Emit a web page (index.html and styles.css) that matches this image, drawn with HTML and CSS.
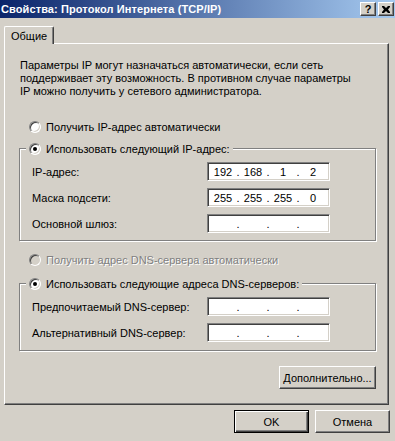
FILE: index.html
```html
<!DOCTYPE html>
<html lang="ru">
<head>
    <meta charset="UTF-8">
    <title>Свойства: Протокол Интернета (TCP/IP)</title>
    <link rel="stylesheet" href="styles.css">
</head>
<body>
    <div class="window">
        <div class="titlebar">
            <span class="title">Свойства: Протокол Интернета (TCP/IP)</span>
            <div class="caption-buttons">
                <span class="caption-btn">?</span>
                <span class="caption-btn">
                    <svg width="8" height="7" viewBox="0 0 8 7"><path d="M0 0h2l2 2 2-2h2v1L6 3.5 8 6v1H6L4 5 2 7H0V6l2-2.5L0 1z" fill="#000"/></svg>
                </span>
            </div>
        </div>

        <div class="tabs">
            <div class="tab">Общие</div>
        </div>

        <div class="panel">
            <p class="intro">Параметры IP могут назначаться автоматически, если сеть<br>поддерживает эту возможность. В противном случае параметры<br>IP можно получить у сетевого администратора.</p>

            <div class="radio-row first">
                <span class="radio"></span>Получить IP-адрес автоматически
            </div>

            <div class="group">
                <div class="group-title">
                    <span class="radio checked"></span>Использовать следующий IP-адрес:
                </div>
                <div class="field-row">
                    <span class="field-label">IP-адрес:</span>
                    <div class="ip-box">
                        <span class="seg">192</span><span class="dot">.</span><span class="seg">168</span><span class="dot">.</span><span class="seg">1</span><span class="dot">.</span><span class="seg">2</span>
                    </div>
                </div>
                <div class="field-row">
                    <span class="field-label">Маска подсети:</span>
                    <div class="ip-box">
                        <span class="seg">255</span><span class="dot">.</span><span class="seg">255</span><span class="dot">.</span><span class="seg">255</span><span class="dot">.</span><span class="seg">0</span>
                    </div>
                </div>
                <div class="field-row">
                    <span class="field-label">Основной шлюз:</span>
                    <div class="ip-box">
                        <span class="seg"></span><span class="dot">.</span><span class="seg"></span><span class="dot">.</span><span class="seg"></span><span class="dot">.</span><span class="seg"></span>
                    </div>
                </div>
            </div>

            <div class="radio-row disabled">
                <span class="radio"></span>Получить адрес DNS-сервера автоматически
            </div>

            <div class="group dns">
                <div class="group-title">
                    <span class="radio checked"></span>Использовать следующие адреса DNS-серверов:
                </div>
                <div class="field-row">
                    <span class="field-label">Предпочитаемый DNS-сервер:</span>
                    <div class="ip-box">
                        <span class="seg"></span><span class="dot">.</span><span class="seg"></span><span class="dot">.</span><span class="seg"></span><span class="dot">.</span><span class="seg"></span>
                    </div>
                </div>
                <div class="field-row">
                    <span class="field-label">Альтернативный DNS-сервер:</span>
                    <div class="ip-box">
                        <span class="seg"></span><span class="dot">.</span><span class="seg"></span><span class="dot">.</span><span class="seg"></span><span class="dot">.</span><span class="seg"></span>
                    </div>
                </div>
            </div>

            <div class="panel-footer">
                <button class="btn advanced">Дополнительно...</button>
            </div>
        </div>

        <div class="dialog-buttons">
            <button class="btn default">OK</button>
            <button class="btn">Отмена</button>
        </div>
    </div>
</body>
</html>
```

FILE: styles.css
```css
/* Reset */
* {
    margin: 0;
    padding: 0;
    box-sizing: border-box;
}

body {
    font-family: "Liberation Sans", Arial, sans-serif;
    font-size: 11px;
    color: #000;
    background-color: #d4d0c8;
    overflow: hidden;
}

.window {
    width: 395px;
    height: 441px;
    background-color: #d4d0c8;
}

/* Title bar */
.titlebar {
    height: 18px;
    display: flex;
    align-items: center;
    justify-content: space-between;
    background: linear-gradient(to right, #0a246a, #a6caf0);
    padding: 0 1px 0 1px;
}

.title {
    color: #fff;
    font-weight: bold;
    font-size: 11px;
    letter-spacing: 0.1px;
}

.caption-buttons {
    display: flex;
    gap: 2px;
}

.caption-btn {
    width: 16px;
    height: 14px;
    display: flex;
    align-items: center;
    justify-content: center;
    background-color: #d4d0c8;
    border: 1px solid;
    border-color: #fff #404040 #404040 #fff;
    box-shadow: inset -1px -1px 0 #808080;
    font-weight: bold;
    font-size: 11px;
    line-height: 1;
}

/* Tabs */
.tabs {
    display: flex;
    margin: 8px 0 0 4px;
}

.tab {
    position: relative;
    z-index: 1;
    height: 18px;
    margin-bottom: -1px;
    padding: 2px 6px 0 6px;
    line-height: 14px;
    background-color: #d4d0c8;
    border-top: 1px solid #fff;
    border-left: 1px solid #fff;
    border-right: 1px solid #404040;
    box-shadow: inset -1px 0 0 #808080;
    border-radius: 2px 2px 0 0;
}

/* Panel */
.panel {
    width: 385px;
    height: 362px;
    margin-left: 4px;
    padding: 15px 0 0 15px;
    border-top: 1px solid #fff;
    border-left: 1px solid #fff;
    border-right: 1px solid #404040;
    border-bottom: 1px solid #404040;
    box-shadow: inset -1px -1px 0 #808080;
    display: flex;
    flex-direction: column;
}

.intro {
    line-height: 13px;
}

/* Radio buttons */
.radio-row {
    display: flex;
    align-items: center;
    height: 13px;
    padding-left: 9px;
}

.radio-row.first {
    margin-top: 22px;
}

.radio-row.disabled {
    margin-top: 12px;
    color: #808080;
    text-shadow: 1px 1px 0 #fff;
}

.radio {
    width: 12px;
    height: 12px;
    margin-right: 5px;
    flex-shrink: 0;
    border-radius: 50%;
    background-color: #fff;
    border: 1px solid;
    border-color: #808080 #fff #fff #808080;
    box-shadow: inset 1px 1px 0 #404040, inset -1px -1px 0 #d4d0c8;
    display: flex;
    align-items: center;
    justify-content: center;
}

.radio.checked::after {
    content: "";
    width: 4px;
    height: 4px;
    border-radius: 50%;
    background-color: #000;
}

.radio-row.disabled .radio {
    background-color: #d4d0c8;
}

/* Group boxes */
.group {
    width: 357px;
    margin: 15px 0 0 -1px;
    padding: 0 0 7px 12px;
    border: 1px solid #808080;
    box-shadow: inset 1px 1px 0 #fff, 1px 1px 0 #fff;
}

.group.dns {
    margin-top: 17px;
    padding-bottom: 8px;
}

.group-title {
    display: flex;
    align-items: center;
    width: fit-content;
    height: 13px;
    margin: -7px 0 0 -6px;
    padding: 0 3px 0 3px;
    background-color: #d4d0c8;
}

.field-row {
    display: flex;
    align-items: center;
    height: 19px;
    margin-top: 7px;
}

.field-label {
    width: 175px;
}

.ip-box {
    width: 123px;
    height: 19px;
    display: flex;
    align-items: center;
    padding-left: 3px;
    background-color: #fff;
    border: 1px solid;
    border-color: #808080 #fff #fff #808080;
    box-shadow: inset 1px 1px 0 #404040, inset -1px -1px 0 #d4d0c8;
}

.seg {
    width: 24px;
    text-align: center;
}

.dot {
    width: 6px;
    text-align: center;
}

/* Buttons */
.btn {
    font-family: inherit;
    font-size: 11px;
    color: #000;
    height: 23px;
    width: 75px;
    background-color: #d4d0c8;
    border: 1px solid;
    border-color: #fff #404040 #404040 #fff;
    box-shadow: inset -1px -1px 0 #808080;
    cursor: pointer;
}

.btn.default {
    border: 1px solid #000;
    box-shadow: inset 1px 1px 0 #fff, inset -1px -1px 0 #404040, inset -2px -2px 0 #808080;
}

.panel-footer {
    display: flex;
    justify-content: flex-end;
    padding-right: 12px;
    margin-top: 15px;
}

.btn.advanced {
    width: 97px;
}

.dialog-buttons {
    display: flex;
    justify-content: flex-end;
    gap: 6px;
    margin-top: 5px;
    padding-right: 5px;
}
```
